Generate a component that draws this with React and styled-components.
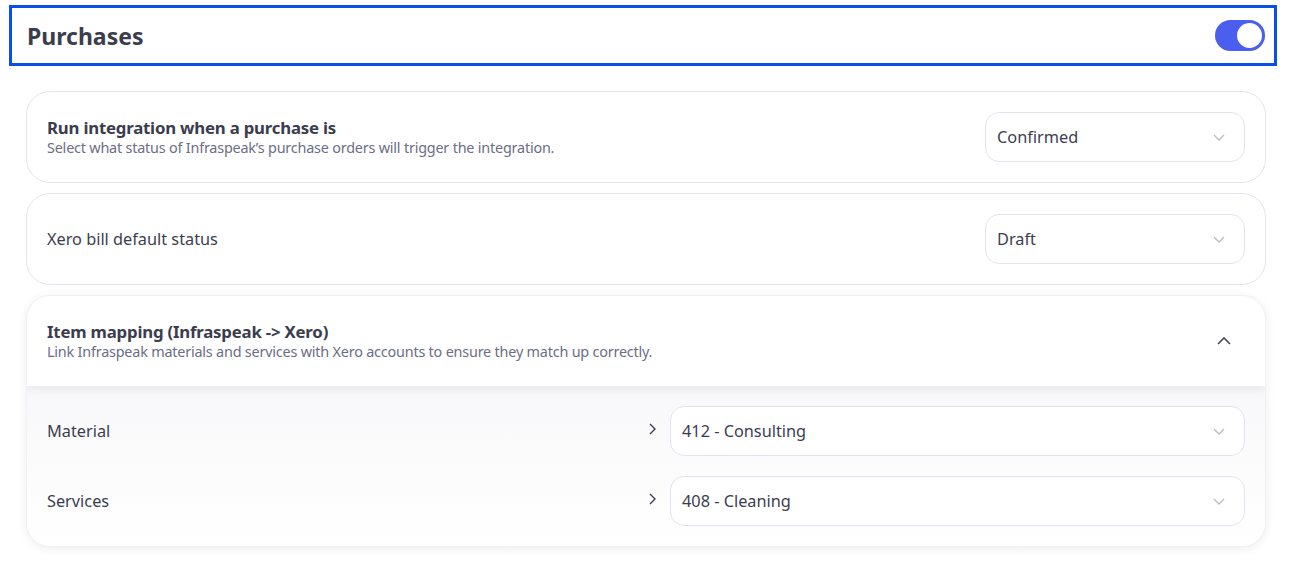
import React from "react";
import styled, { createGlobalStyle } from "styled-components";

const Global = createGlobalStyle`
  body {
    margin: 0;
    background: #fff;
    font-family: "Noto Sans", "Open Sans", sans-serif;
    color: #3b3d4f;
  }
`;

const Page = styled.div`
  padding: 5px 25px 16px 9px;
  display: flex;
  flex-direction: column;
`;

const Header = styled.div`
  height: 55px;
  border: 3px solid #0a4fe8;
  display: flex;
  align-items: center;
  justify-content: space-between;
  padding: 0 9px 0 15px;
`;

const Title = styled.h1`
  margin: 0;
  font-size: 23px;
  font-weight: 700;
  color: #3b3d4f;
`;

const Toggle = styled.div`
  width: 50px;
  height: 31px;
  border-radius: 16px;
  background: #4a5ef0;
  position: relative;
  &::after {
    content: "";
    position: absolute;
    right: 3px;
    top: 3px;
    width: 25px;
    height: 25px;
    border-radius: 50%;
    background: #fff;
  }
`;

const List = styled.div`
  display: flex;
  flex-direction: column;
  gap: 10px;
  margin: 25px 11px 0 17px;
`;

const Card = styled.div`
  border: 1px solid ${(p) => (p.$raised ? "#f0f0f5" : "#e4e4ee")};
  border-radius: 24px;
  background: #fff;
  overflow: hidden;
  ${(p) => p.$raised && `box-shadow: 0 2px 10px rgba(40, 40, 80, 0.08);`}
`;

const Row = styled.div`
  height: 90px;
  display: flex;
  align-items: center;
  justify-content: space-between;
  padding: 0 20px 0 20px;
  box-sizing: border-box;
  position: relative;
  z-index: 1;
  ${(p) => p.$shadow && `box-shadow: 0 4px 8px rgba(40, 40, 80, 0.07);`}
`;

const Texts = styled.div`
  display: flex;
  flex-direction: column;
`;

const Label = styled.div`
  font-size: ${(p) => (p.$bold ? "16.8px" : "16.3px")};
  font-weight: ${(p) => (p.$bold ? 700 : 400)};
  color: #3b3d4f;
  line-height: 20px;
  letter-spacing: ${(p) => (p.$bold ? "-0.2px" : "0")};
`;

const Sub = styled.div`
  font-size: 14.4px;
  color: #6b6e85;
  line-height: 19px;
  letter-spacing: -0.2px;
`;

const Select = styled.div`
  width: ${(p) => p.$width || "260px"};
  height: 50px;
  box-sizing: border-box;
  border: 1px solid #e2e2ee;
  border-radius: 14px;
  background: #fff;
  display: flex;
  align-items: center;
  justify-content: space-between;
  padding: 0 18px 0 11px;
  font-size: 16.3px;
  color: #3b3d4f;
`;

const Body = styled.div`
  background: linear-gradient(#f8f8fa, #ffffff);
  padding: 20px 20px 20px 20px;
  display: flex;
  flex-direction: column;
  gap: 20px;
`;

const MapRow = styled.div`
  display: flex;
  align-items: center;
`;

const MapLabel = styled.div`
  flex: 1;
  font-size: 16.3px;
  color: #3b3d4f;
`;

const Arrow = styled.div`
  width: 23px;
  display: flex;
  align-items: center;
  margin-top: -4px;
`;

const Toggler = styled.div`
  margin-right: 13px;
  display: flex;
`;

const ChevronDown = () => (
  <svg width="14" height="14" viewBox="0 0 14 14" fill="none">
    <path d="M2 5l5 5 5-5" stroke="#b9bccb" strokeWidth="1.3" />
  </svg>
);

const ChevronUp = () => (
  <svg width="16" height="16" viewBox="0 0 16 16" fill="none">
    <path d="M2 11l6-6 6 6" stroke="#4a4c5e" strokeWidth="1.6" />
  </svg>
);

const ChevronRight = () => (
  <svg width="10" height="14" viewBox="0 0 10 14" fill="none">
    <path d="M3 2l5 5-5 5" stroke="#3b3d4f" strokeWidth="1.4" />
  </svg>
);

const mappings = [
  { name: "Material", value: "412 - Consulting" },
  { name: "Services", value: "408 - Cleaning" },
];

export default function App() {
  return (
    <Page>
      <Global />
      <Header>
        <Title>Purchases</Title>
        <Toggle />
      </Header>
      <List>
        <Card>
          <Row>
            <Texts>
              <Label $bold>Run integration when a purchase is</Label>
              <Sub>Select what status of Infraspeak’s purchase orders will trigger the integration.</Sub>
            </Texts>
            <Select>
              Confirmed
              <ChevronDown />
            </Select>
          </Row>
        </Card>
        <Card>
          <Row>
            <Label>Xero bill default status</Label>
            <Select>
              Draft
              <ChevronDown />
            </Select>
          </Row>
        </Card>
        <Card $raised>
          <Row $shadow>
            <Texts>
              <Label $bold>Item mapping (Infraspeak -&gt; Xero)</Label>
              <Sub>Link Infraspeak materials and services with Xero accounts to ensure they match up correctly.</Sub>
            </Texts>
            <Toggler>
              <ChevronUp />
            </Toggler>
          </Row>
          <Body>
            {mappings.map((m) => (
              <MapRow key={m.name}>
                <MapLabel>{m.name}</MapLabel>
                <Arrow>
                  <ChevronRight />
                </Arrow>
                <Select $width="575px">
                  {m.value}
                  <ChevronDown />
                </Select>
              </MapRow>
            ))}
          </Body>
        </Card>
      </List>
    </Page>
  );
}
